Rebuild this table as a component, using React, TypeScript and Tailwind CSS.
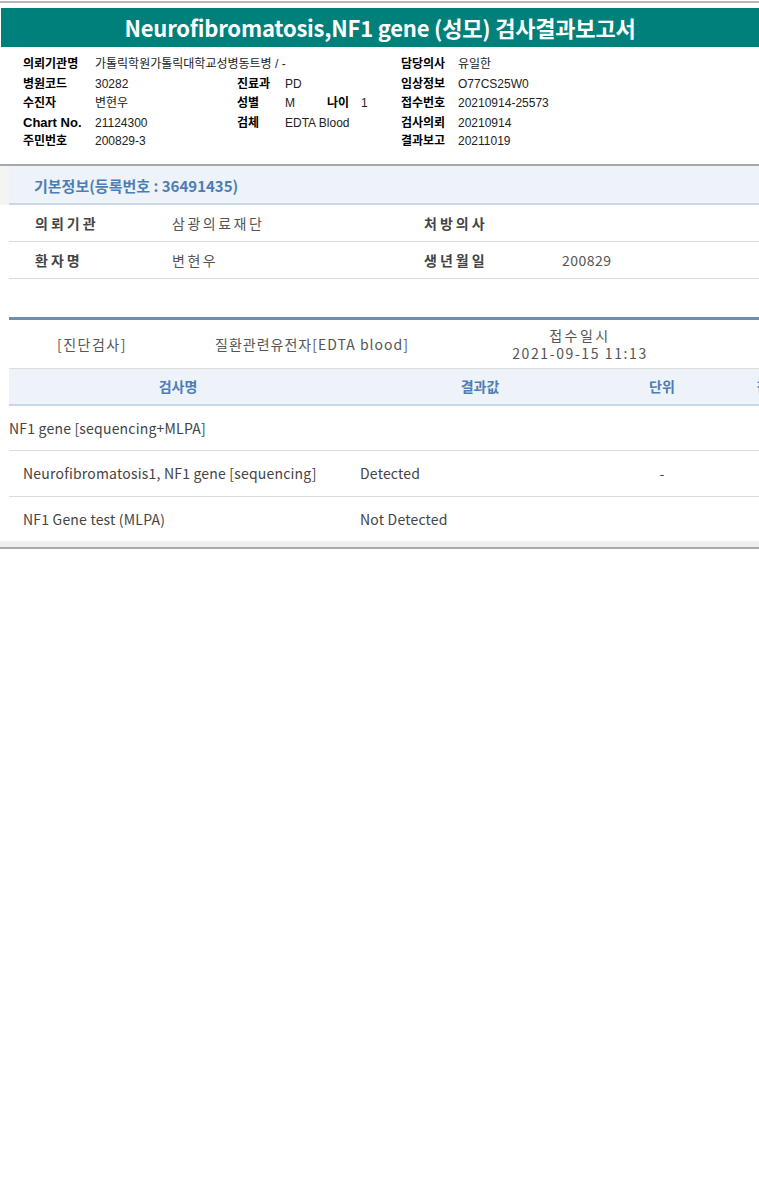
const kr = { fontFamily: '"Noto Sans CJK KR", "Noto Sans", sans-serif' };
const small = { fontFamily: '"Liberation Sans", "Noto Sans CJK KR", sans-serif' };

const infoRows = [
  { l1: '의뢰기관명', v1: '가톨릭학원가톨릭대학교성병동트병 / -', l3: '담당의사', v3: '유일한', h: 'h-[20px]' },
  { l1: '병원코드', v1: '30282', l2: '진료과', v2: 'PD', l3: '임상정보', v3: 'O77CS25W0', h: 'h-[19px]' },
  { l1: '수진자', v1: '변현우', l2: '성별', v2: 'M', age: '1', l3: '접수번호', v3: '20210914-25573', h: 'h-[20px]' },
  { l1: 'Chart No.', v1: '21124300', l2: '검체', v2: 'EDTA Blood', l3: '검사의뢰', v3: '20210914', h: 'h-[19px]' },
  { l1: '주민번호', v1: '200829-3', l3: '결과보고', v3: '20211019', h: 'h-[18px]' },
];

const results = [
  { name: 'NF1 gene [sequencing+MLPA]', value: '', unit: '', indent: false, h: 'h-[45px]' },
  { name: 'Neurofibromatosis1, NF1 gene [sequencing]', value: 'Detected', unit: '-', indent: true, h: 'h-[46px]' },
  { name: 'NF1 Gene test (MLPA)', value: 'Not Detected', unit: '', indent: true, h: 'h-[44px]' },
];

export default function App() {
  return (
    <div className="w-[759px] overflow-hidden bg-white text-[#333]" style={kr}>
      <div className="mt-px h-[2px] bg-[#b8b8b8]" />

      {/* title bar */}
      <div className="mt-[5px] ml-px h-[39px] bg-[#00807b] flex items-center justify-center">
        <h1 className="text-white text-[22px] font-bold tracking-[-0.2px] whitespace-nowrap">
          Neurofibromatosis,NF1 gene (성모) 검사결과보고서
        </h1>
      </div>

      {/* report header info */}
      <div className="pt-[7px] pb-[14px] text-[12px]" style={small}>
        {infoRows.map((r) => (
          <div key={r.l1} className={`flex items-center pl-[23px] whitespace-nowrap ${r.h}`}>
            <span className={`w-[72px] font-bold text-black ${r.l1 === 'Chart No.' ? 'text-[13px]' : ''}`}>{r.l1}</span>
            {r.l2 ? (
              <>
                <span className="w-[142px] text-[#222]">{r.v1}</span>
                <span className="w-[48px] font-bold text-black">{r.l2}</span>
                {r.age ? (
                  <>
                    <span className="w-[42px] text-[#222]">{r.v2}</span>
                    <span className="w-[34px] font-bold text-black">나이</span>
                    <span className="w-[40px] text-[#222]">{r.age}</span>
                  </>
                ) : (
                  <span className="w-[116px] text-[#222]">{r.v2}</span>
                )}
              </>
            ) : (
              <span className="w-[306px] text-[#222]">{r.v1}</span>
            )}
            <span className="w-[57px] font-bold text-black">{r.l3}</span>
            <span className="text-[#222]">{r.v3}</span>
          </div>
        ))}
      </div>

      <div className="h-[2px] bg-[#a9a9a9]" />

      {/* basic info */}
      <div className="flex">
        <div className="w-[9px] h-[39px] bg-[#f4f4f4]" />
        <div className="flex-1">
          <div className="h-[39px] bg-[#edf3f8] border-b-2 border-[#c8d8ec] flex items-center pl-[25px] pt-[4px]">
            <span className="text-[15px] font-bold text-[#4d7db6]">기본정보(등록번호 : 36491435)</span>
          </div>
          {[
            ['의뢰기관', '삼광의료재단', '처방의사', ''],
            ['환자명', '변현우', '생년월일', '200829'],
          ].map((row) => (
            <div key={row[0]} className="h-[37px] border-b border-[#dcdcdc] flex items-center text-[14px]">
              <span className="w-[163px] pl-[26px] font-bold text-[#444] tracking-[3px]">{row[0]}</span>
              <span className="w-[252px] text-[#555] tracking-[2.5px]">{row[1]}</span>
              <span className="w-[138px] font-bold text-[#444] tracking-[3px]">{row[2]}</span>
              <span className="text-[#555] tracking-[0.5px]">{row[3]}</span>
            </div>
          ))}
        </div>
      </div>

      {/* results */}
      <div className="ml-[9px] mt-[38px]">
        <div className="h-[3px] bg-[#6d8fb3]" />
        <div className="h-[49px] border-b border-[#dcdcdc] flex items-center text-[14px] text-[#555] whitespace-nowrap">
          <span className="w-[166px] text-center tracking-[1.5px]">[진단검사]</span>
          <span className="w-[274px] text-center tracking-[1px]">질환관련유전자[EDTA blood]</span>
          <span className="w-[262px] text-center leading-[18px]">
            <span className="tracking-[2.5px]">접수일시</span>
            <br />
            <span className="tracking-[1.6px]">2021-09-15 11:13</span>
          </span>
        </div>
        <div className="h-[37px] bg-[#edf3f8] border-b-2 border-[#c8d8ec] flex items-center text-[14px] font-bold text-[#4d7db6] whitespace-nowrap">
          <span className="w-[338px] shrink-0 text-center">검사명</span>
          <span className="w-[266px] shrink-0 text-center">결과값</span>
          <span className="w-[98px] shrink-0 text-center">단위</span>
          <span className="w-[130px] shrink-0 text-center">참고치</span>
        </div>
        {results.map((r) => (
          <div key={r.name} className={`${r.h} border-b border-[#dcdcdc] last:border-b-0 flex items-center text-[14px] text-[#444] whitespace-nowrap tracking-[0.2px]`}>
            <span className={`w-[338px] shrink-0 ${r.indent ? 'pl-[14px]' : ''}`}>{r.name}</span>
            <span className="w-[266px] shrink-0 pl-[13px]">{r.value}</span>
            <span className="w-[98px] shrink-0 text-center">{r.unit}</span>
          </div>
        ))}
      </div>
      <div className="h-[6px] bg-[#eeeeee]" />
      <div className="h-[2px] bg-[#a9a9a9]" />
    </div>
  );
}
